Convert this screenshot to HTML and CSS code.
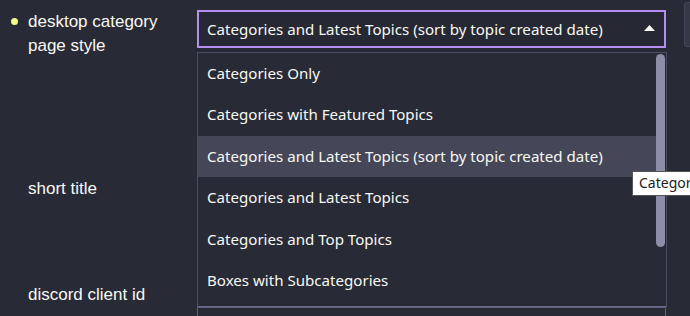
FILE: index.html
```html
<!DOCTYPE HTML>
<html lang="en-US">
<head>
    <meta charset="UTF-8">
    <title>settings</title>
    <link rel="stylesheet" href="styles.css">
</head>
<body>
    <div class="settings">
        <div class="row row-first">
            <div class="label">
                <span class="dot"></span>
                <span class="name">desktop category page style</span>
            </div>
            <div class="control">
                <div class="select">
                    <span class="value">Categories and Latest Topics (sort by topic created date)</span>
                    <svg class="caret" width="11" height="6" viewBox="0 0 11 6"><path d="M0 6 L5.5 0 L11 6 Z" fill="#f8f8f2"/></svg>
                </div>
                <div class="side-btn"></div>
            </div>
        </div>

        <div class="row row-second">
            <div class="label">
                <span class="name">short title</span>
            </div>
            <div class="control"></div>
        </div>

        <div class="row row-third">
            <div class="label">
                <span class="name">discord client id</span>
            </div>
            <div class="control">
                <div class="input"></div>
            </div>
        </div>
    </div>

    <div class="dropdown">
        <ul class="options">
            <li>Categories Only</li>
            <li>Categories with Featured Topics</li>
            <li class="hover">Categories and Latest Topics (sort by topic created date)</li>
            <li>Categories and Latest Topics</li>
            <li>Categories and Top Topics</li>
            <li>Boxes with Subcategories</li>
        </ul>
        <div class="scrollbar"><div class="thumb"></div></div>
    </div>

    <div class="tooltip">Categories and Latest Topics (sort by topic created date)</div>
</body>
</html>
```

FILE: styles.css
```css
html, body {
    margin: 0;
    height: 100%;
    overflow: hidden;
}

body {
    background: #282a36;
    color: #f8f8f2;
    position: relative;
}

.settings {
    padding-top: 10px;
}

.row {
    display: flex;
}

.row-first {
    height: 167px;
}

.row-second {
    height: 106px;
}

.label {
    width: 197px;
    flex: none;
    display: flex;
    align-items: flex-start;
    padding-left: 28px;
    box-sizing: border-box;
    position: relative;
    font: 17px/24px "Liberation Sans", Arial, sans-serif;
}

.dot {
    position: absolute;
    left: 11px;
    top: 8px;
    width: 7px;
    height: 7px;
    border-radius: 50%;
    background: #f1fa8c;
}

.name {
    width: 150px;
}

.control {
    flex: 1;
    display: flex;
    align-items: flex-start;
}

.select {
    width: 469px;
    height: 38px;
    box-sizing: border-box;
    border: 2px solid #b48ef2;
    display: flex;
    align-items: center;
    padding: 0 9px 0 8px;
    font: 15.1px "Noto Sans", "Open Sans", sans-serif;
    color: #f8f8f2;
    background: #262833;
}

.value {
    flex: 1;
    white-space: nowrap;
}

.caret {
    display: block;
    margin-bottom: 2px;
}

.side-btn {
    margin-left: 18px;
    margin-top: -8px;
    width: 20px;
    height: 43px;
    background: #363846;
    border: 1px solid #44475a;
    border-radius: 3px;
}

.row-third .control {
    padding-top: 24px;
}

.input {
    width: 469px;
    height: 40px;
    box-sizing: border-box;
    border: 1px solid #5d607c;
}

/* open select menu */
.dropdown {
    position: absolute;
    left: 197px;
    top: 52px;
    width: 470px;
    height: 255px;
    box-sizing: border-box;
    border: 1px solid #4b4d63;
    border-bottom-color: #6a6d8a;
    background: #282a36;
    display: flex;
}

.options {
    list-style: none;
    margin: 0;
    padding: 0;
    flex: 1;
    font: 15.1px "Noto Sans", "Open Sans", sans-serif;
}

.options li {
    height: 41.4px;
    line-height: 41.4px;
    padding-left: 9px;
    white-space: nowrap;
}

.options li.hover {
    background: #454759;
}

.scrollbar {
    width: 10px;
    flex: none;
    padding-top: 1px;
}

.thumb {
    width: 9px;
    height: 193px;
    border-radius: 5px;
    background: #8c8ea9;
}

.tooltip {
    position: absolute;
    left: 632px;
    top: 171px;
    height: 23px;
    padding: 0 6px;
    line-height: 23px;
    background: #fff;
    color: #222;
    border: 1px solid #555;
    font: 14px/22px "Noto Sans", "Open Sans", sans-serif;
    white-space: nowrap;
}
```
